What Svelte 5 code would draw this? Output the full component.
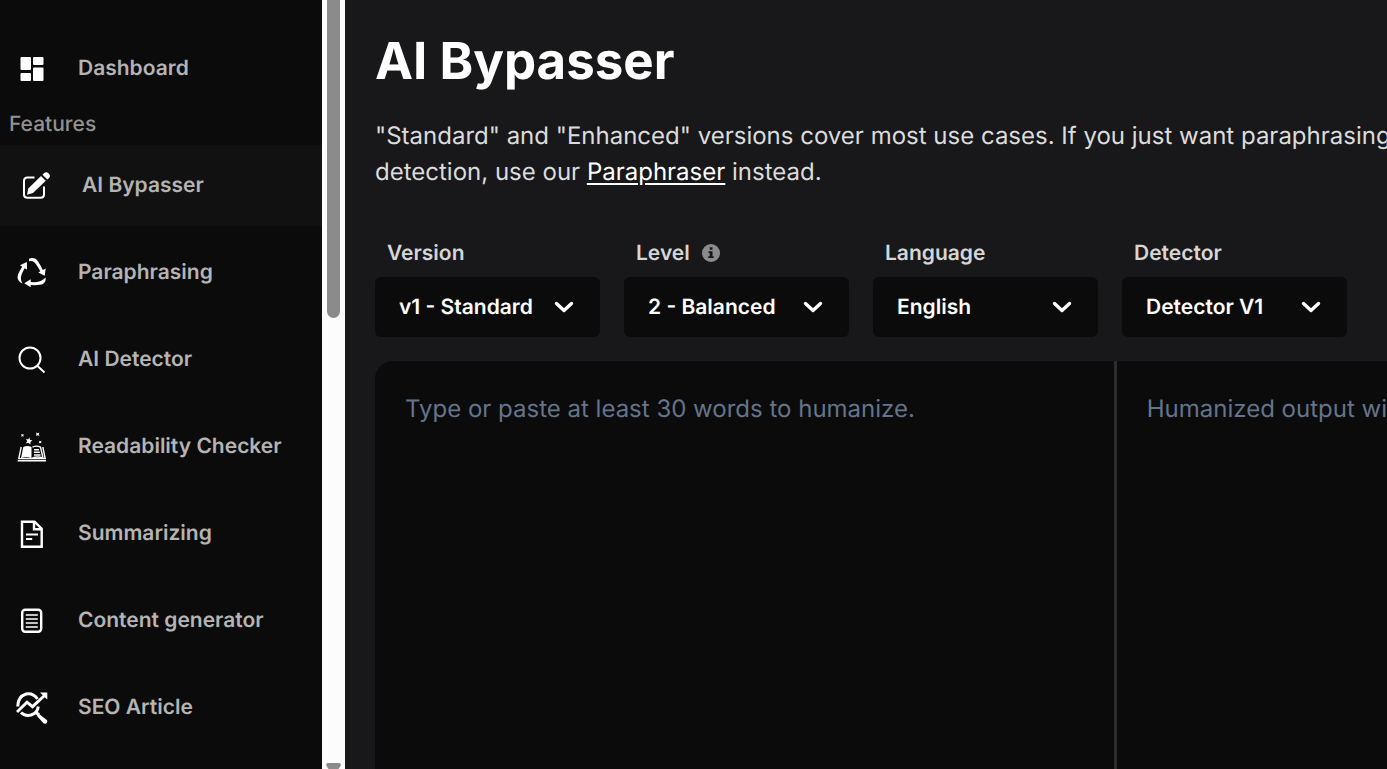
<script lang="ts">
  interface NavItem {
    label: string
    icon: string
  }

  interface Picker {
    id: string
    label: string
    options: string[]
    info?: boolean
  }

  const features: NavItem[] = [
    { label: 'AI Bypasser', icon: 'edit' },
    { label: 'Paraphrasing', icon: 'recycle' },
    { label: 'AI Detector', icon: 'search' },
    { label: 'Readability Checker', icon: 'book' },
    { label: 'Summarizing', icon: 'file' },
    { label: 'Content generator', icon: 'list' },
    { label: 'SEO Article', icon: 'seo' }
  ]

  const pickers: Picker[] = [
    { id: 'version', label: 'Version', options: ['v1 - Standard'] },
    { id: 'level', label: 'Level', options: ['2 - Balanced'], info: true },
    { id: 'language', label: 'Language', options: ['English'] },
    { id: 'detector', label: 'Detector', options: ['Detector V1'] }
  ]

  let active = $state('AI Bypasser')
  let input = $state('')
  let output = $state('')
</script>

{#snippet icon(name: string)}
  <svg class="icon" viewBox="0 0 32 32" aria-hidden="true">
    {#if name === 'dashboard'}
      <rect x="4.500" y="4" width="10.500" height="13" rx="1" />
      <rect x="4.500" y="20" width="10.500" height="8" rx="1" />
      <rect x="17" y="4" width="10.500" height="8" rx="1" />
      <rect x="17" y="14.500" width="10.500" height="13.500" rx="1" />
    {:else if name === 'edit'}
      <path class="line" d="M14.5 7.500H7.500Q4 7.500 4 11V24.500Q4 27.800 7.500 27.800H20.500Q24 27.800 24 24.500V16.500" />
      <path d="M7 24.800L8.300 18.500L21 6L25.800 10.800L13 23Z" />
      <path d="M22.500 4.800L24.200 3Q26.300 1.200 28.700 3.500Q31 5.800 29 8L27.300 9.600Z" />
    {:else if name === 'recycle'}
      <path d="M13 1.800Q16 .3 19.500 1.800Q22 3 26.800 13L29.700 11.500L28.700 18.700L22.300 15.500L24.300 14.300Q21 8 18.500 5.500Q16 3.500 13 4.300Z" />
      <path d="M10.900 5L11 12.500L8.700 11.300Q5 17.500 4.900 21Q4.900 24 6.500 26.500Q2 24.500 1.500 20.500Q1.500 17 6.200 9.800L4 8.300Z" />
      <path d="M8.300 26.300L14.700 22.300V25Q20 25.500 24 24.200Q27 23 29.700 20.500Q30 25 27 27Q24 28.500 14.700 28V30.300Z" />
    {:else if name === 'search'}
      <circle class="line" cx="14" cy="14" r="10.500" />
      <path class="line" d="M21 21.500L28.500 28.500" />
    {:else if name === 'book'}
      <path d="M13.300 6.300L14 8.900L16.500 9.300L14.400 11L14.500 13.500L12.500 12L9.700 12.300L11.200 10.200L10 7.800L12.200 8.500Z" />
      <path d="M20 1.500L21.700 2.300L23.300 1.500L22.800 3.200L23.500 4.900L21.700 4.200L20 5L20.500 3.300ZM5 3L6.500 3.500L7.800 3L7.300 4.300L7.800 5.500L6.500 5.200L5 5.500L5.700 4.300ZM22.800 9.800L24.200 10.300L25.500 9.800L25 11.100L25.500 12.300L24.200 11.900L22.800 12.300L23.400 11.100Z" />
      <path d="M7.300 16Q11.500 14 15.500 16V27.300Q10.500 25.300 5 27.300Z" />
      <path class="thin" d="M16.500 16.200Q20.500 14 24.500 16.200L27 27Q21.500 25 16.500 27M18 18.700H23M18 21.300H23.800M18 24H24.500" />
      <path class="thin" d="M5.200 16L2.800 27.600H29.200L26.800 16M1.700 29.800H30" />
    {:else if name === 'file'}
      <path class="line heavy" d="M6 3.700H18.500L25.700 10.700V28.700H6ZM18 4V11.200H25.500" />
      <path class="line" d="M10 16.500H22M10 21H16.200" />
    {:else if name === 'list'}
      <rect class="line heavy" x="6.200" y="4.700" width="19" height="22" rx="3" />
      <path class="thin" d="M9.800 10H21.800M9.800 14H21.800M9.800 18H21.800M9.800 22H21.800" />
    {:else if name === 'seo'}
      <path class="bold" d="M1.800 14.500Q1.500 5 10 2Q17 .5 21.500 7M5 20.500Q9 24.500 15 23Q21.500 21 22.300 14.500" />
      <path class="bold" d="M1 20L11 10.200L16.500 14.700L28 4" />
      <path d="M24 .5H31.300V7.500L29 5.500L26.500 3Z" />
      <path class="bold" d="M19.500 20L23 23" />
      <path d="M22.500 21.500L30.800 28Q32 30 30.500 31.200Q28.500 32.500 27 30.800L21 24Z" />
    {/if}
  </svg>
{/snippet}

<div class="app">
  <aside class="sidebar">
    <nav>
      <a class="item" href="#dashboard">
        {@render icon('dashboard')}
        <span>Dashboard</span>
      </a>
      <p class="group">Features</p>
      {#each features as { label, icon: name }}
        <a
          class="item"
          class:active={active === label}
          href="#{name}"
          onclick={() => (active = label)}
        >
          {@render icon(name)}
          <span>{label}</span>
        </a>
      {/each}
    </nav>
    <div class="scrollbar" aria-hidden="true">
      <div class="thumb"></div>
      <svg class="arrow" viewBox="0 0 15 6">
        <path d="M1.500 0H13.500Q15.500 1 14.500 3L12.500 6H2.500L.5 3Q-.5 1 1.500 0Z" />
      </svg>
    </div>
  </aside>

  <main>
    <h1>AI Bypasser</h1>
    <p class="intro">
      "Standard" and "Enhanced" versions cover most use cases. If you just want paraphrasing<br />
      detection, use our <a href="#recycle">Paraphraser</a> instead.
    </p>

    <div class="pickers">
      {#each pickers as { id, label, options, info }}
        <div class="picker">
          <div class="caption">
            <label for={id}>{label}</label>
            {#if info}
              <svg class="info" viewBox="0 0 18 18" aria-hidden="true">
                <circle cx="9" cy="9" r="9" />
                <path d="M7.700 3.300H10.500V5.700H7.700ZM6.500 7.300H10.500V12.200H11.700V14H6.300V12.200H7.700V9H6.500Z" />
              </svg>
            {/if}
          </div>
          <div class="control">
            <select {id}>
              {#each options as option}
                <option>{option}</option>
              {/each}
            </select>
            <svg class="chevron" viewBox="0 0 20 12" aria-hidden="true">
              <path d="M2.500 2.500L10 9.500L17.500 2.500" />
            </svg>
          </div>
        </div>
      {/each}
    </div>

    <div class="editor">
      <textarea
        bind:value={input}
        aria-label="Text to humanize"
        placeholder="Type or paste at least 30 words to humanize."
      ></textarea>
      <textarea
        bind:value={output}
        aria-label="Humanized output"
        placeholder="Humanized output will appear here."
        readonly
      ></textarea>
    </div>
  </main>
</div>

<style>
  :global(body) {
    overflow: hidden;
    background: #18181a;
  }

  .app {
    display: flex;
    height: 100vh;
    font-family: Inter, 'Liberation Sans', sans-serif;
    text-rendering: geometricPrecision;
    color: #fff;
    background: #18181a;
  }

  .sidebar {
    display: flex;
    flex: none;
    width: 345px;
    background: #0b0b0b;
  }

  nav {
    display: flex;
    flex: 1;
    flex-direction: column;
    gap: 6px;
    padding-top: 28px;
    overflow: hidden;
  }

  .item {
    display: flex;
    flex: none;
    align-items: center;
    gap: 30px;
    height: 81px;
    padding-left: 16px;
    font-size: 21px;
    font-weight: 600;
    line-height: 29px;
    color: #b4b4b4;
    text-decoration: none;
  }

  .item.active {
    padding-left: 20px;
    background: #111;
  }

  .group {
    margin: -6px 0 -2px;
    padding-left: 9px;
    font-size: 21px;
    font-weight: 500;
    line-height: 32px;
    color: #929292;
  }

  .icon {
    flex: none;
    width: 32px;
    height: 32px;
    fill: #fff;
  }

  .line,
  .thin,
  .bold {
    fill: none;
    stroke: #fff;
    stroke-width: 2;
  }

  .heavy {
    stroke-width: 2.4;
  }

  .thin {
    stroke-width: 1.4;
  }

  .bold {
    stroke-width: 3;
  }

  .scrollbar {
    display: flex;
    flex: none;
    flex-direction: column;
    align-items: center;
    justify-content: space-between;
    width: 23px;
    background: #fcfcfc;
  }

  .thumb {
    width: 13px;
    height: 318px;
    border-radius: 0 0 7px 7px;
    background: #8b8b8b;
  }

  .arrow {
    width: 15px;
    height: 6px;
    fill: #8b8b8b;
  }

  main {
    display: flex;
    flex: 1;
    flex-direction: column;
    min-width: 0;
    padding: 30px 0 0 30px;
    overflow: hidden;
  }

  h1 {
    margin: 0;
    font-size: 51px;
    font-weight: 700;
    line-height: 64px;
  }

  .intro {
    margin: 24px 0 0;
    font-size: 24px;
    line-height: 36px;
    color: #dcdcdc;
    white-space: nowrap;
  }

  .intro a {
    color: #fff;
    text-underline-offset: 3px;
  }

  .pickers {
    display: flex;
    gap: 24px;
    margin-top: 45px;
  }

  .picker {
    width: 225px;
  }

  .caption {
    display: flex;
    align-items: center;
    gap: 12px;
    height: 36px;
    margin-bottom: 6px;
    padding-left: 12px;
    font-size: 21px;
    font-weight: 600;
    color: #d6d6d6;
  }

  .info {
    width: 18px;
    height: 18px;
    fill: #8b8b8b;
  }

  .info path {
    fill: #18181a;
  }

  .control {
    position: relative;
  }

  select {
    appearance: none;
    width: 100%;
    height: 60px;
    padding: 0 48px 0 24px;
    border: 0;
    border-radius: 6px;
    font: inherit;
    font-size: 21px;
    font-weight: 600;
    text-rendering: inherit;
    color: #fff;
    background: #0b0b0b;
  }

  .chevron {
    position: absolute;
    top: 24px;
    right: 26px;
    width: 20px;
    height: 12px;
    fill: none;
    stroke: #fff;
    stroke-width: 3.4;
    stroke-linecap: round;
    stroke-linejoin: round;
    pointer-events: none;
  }

  .editor {
    display: grid;
    flex: 1;
    grid-template-columns: 1fr 1fr;
    width: 146%;
    margin-top: 24px;
    border-radius: 18px 0 0 0;
    background: #0b0b0b;
    overflow: hidden;
  }

  textarea {
    padding: 30px;
    border: 0;
    outline: 0;
    resize: none;
    font: inherit;
    font-size: 24px;
    line-height: 36px;
    text-rendering: inherit;
    color: #fff;
    background: transparent;
  }

  textarea + textarea {
    border-left: 3px solid #2c2c2c;
  }

  textarea::placeholder {
    color: #64748b;
  }
</style>
